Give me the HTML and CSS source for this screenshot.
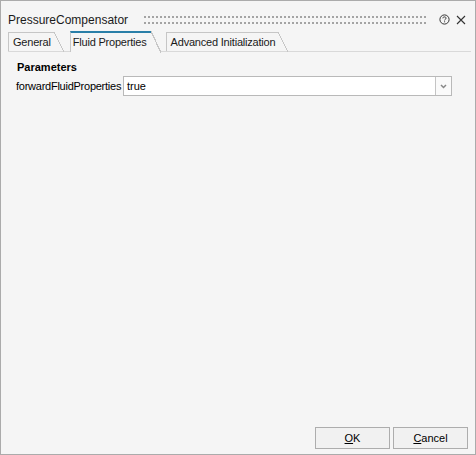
FILE: index.html
```html
<!DOCTYPE html>
<html>
<head>
<meta charset="utf-8">
<link rel="stylesheet" href="styles.css">
</head>
<body>
<div class="window">
  <div class="titlebar">
    <span class="title">PressureCompensator</span>
    <svg class="grip" height="8"><defs><pattern id="dots" width="4" height="6" patternUnits="userSpaceOnUse"><rect width="2" height="2" fill="#a4a4a4"/></pattern></defs><rect width="100%" height="8" fill="url(#dots)"/></svg>
    <svg class="help" width="11" height="11" viewBox="0 0 11 11"><circle cx="5.5" cy="5.5" r="4.6" fill="none" stroke="#333" stroke-width="1"/><path d="M3.9 4.3 C3.9 3.3 4.6 2.9 5.5 2.9 C6.4 2.9 7.1 3.4 7.1 4.2 C7.1 5.1 5.6 5.3 5.6 6.4" fill="none" stroke="#333" stroke-width="1"/><rect x="5.1" y="7.3" width="1" height="1" fill="#333"/></svg>
    <svg class="close" width="10" height="10" viewBox="0 0 10 10"><path d="M1 1 L9 9 M9 1 L1 9" stroke="#333" stroke-width="1.1"/></svg>
  </div>
  <div class="tabs">
    <div class="tab">General</div>
    <div class="tab active">Fluid Properties</div>
    <div class="tab">Advanced Initialization</div>
  </div>
  <div class="content">
    <div class="section">Parameters</div>
    <div class="row">
      <span class="label">forwardFluidProperties</span>
      <div class="combo">
        <span class="value">true</span>
        <span class="drop"><svg width="7" height="5" viewBox="0 0 7 5"><path d="M1 1 L3.5 3.5 L6 1" fill="none" stroke="#888" stroke-width="1.5"/></svg></span>
      </div>
    </div>
  </div>
  <div class="footer">
    <button class="btn"><u>O</u>K</button>
    <button class="btn"><u>C</u>ancel</button>
  </div>
</div>
</body>
</html>
```
FILE: styles.css
```css
html, body {
  margin: 0;
  padding: 0;
}
body {
  font-family: "Liberation Sans", Arial, sans-serif;
  font-size: 11px;
  color: #000;
  background: #f5f5f5;
}
.window {
  box-sizing: border-box;
  width: 476px;
  height: 455px;
  border: 1px solid #ababab;
  background: #f5f5f5;
  display: flex;
  flex-direction: column;
}
.titlebar {
  height: 30px;
  box-sizing: border-box;
  padding: 7px 9px 0 7px;
  display: flex;
  align-items: center;
}
.title {
  font-size: 12px;
  color: #1a1a1a;
  white-space: nowrap;
}
.grip {
  flex: 1;
  margin: 0 11px 0 16px;
  min-width: 0;
}
.help {
  margin-right: 6px;
}
.tabs {
  display: flex;
  align-items: flex-end;
  height: 20px;
  margin: 0 4px 0 7px;
  border-bottom: 1px solid #d9d9d9;
}
.tab {
  position: relative;
  height: 18px;
  line-height: 18px;
  box-sizing: content-box;
  border-top: 1px solid #c6c6c6;
  border-left: 1px solid #c6c6c6;
  padding: 0 3px 0 4px;
  margin-right: 16px;
  white-space: nowrap;
  letter-spacing: -0.2px;
  color: #1a1a1a;
}
.tab::after {
  content: "";
  position: absolute;
  left: 100%;
  top: -1px;
  width: 10px;
  height: 20px;
  background: linear-gradient(to top right, transparent calc(50% - 0.6px), #c6c6c6 calc(50% - 0.6px), #c6c6c6 calc(50% + 0.6px), transparent calc(50% + 0.6px));
}
.tab.active {
  height: 19px;
  line-height: 19px;
  border-top: 2px solid #2a7fa8;
  margin-bottom: -1px;
  background: #f5f5f5;
  padding: 0 4px 0 2px;
  margin-right: 15px;
}
.tab.active::after {
  top: -2px;
  height: 22px;
  width: 10px;
  background: linear-gradient(to top right, #f5f5f5 calc(50% - 0.6px), #c6c6c6 calc(50% - 0.6px), #c6c6c6 calc(50% + 0.6px), transparent calc(50% + 0.6px));
}
.content {
  flex: 1;
  padding: 7px 23px 0 15px;
}
.section {
  font-weight: bold;
  font-size: 11px;
  margin-left: 1px;
  height: 17px;
  line-height: 16px;
}
.row {
  display: flex;
  align-items: center;
}
.label {
  width: 107px;
  flex: none;
  letter-spacing: -0.25px;
  white-space: nowrap;
}
.combo {
  flex: 1;
  height: 20px;
  box-sizing: border-box;
  border: 1px solid #b9b9b9;
  background: #fff;
  display: flex;
  align-items: center;
}
.value {
  flex: 1;
  padding-left: 3px;
}
.drop {
  width: 16px;
  height: 18px;
  box-sizing: border-box;
  border-left: 1px solid #c4c4c4;
  background: #fafafa;
  display: flex;
  align-items: center;
  justify-content: center;
}
.footer {
  display: flex;
  justify-content: flex-end;
  gap: 3px;
  padding: 0 7px 5px 0;
}
.btn {
  width: 75px;
  height: 22px;
  box-sizing: border-box;
  border: 1px solid #adadad;
  background: #f1f1f1;
  font-family: "Liberation Sans", Arial, sans-serif;
  font-size: 11px;
  color: #000;
  padding: 0;
  border-radius: 0;
}
.btn u {
  text-decoration-thickness: 1px;
  text-underline-offset: 1px;
}
```
